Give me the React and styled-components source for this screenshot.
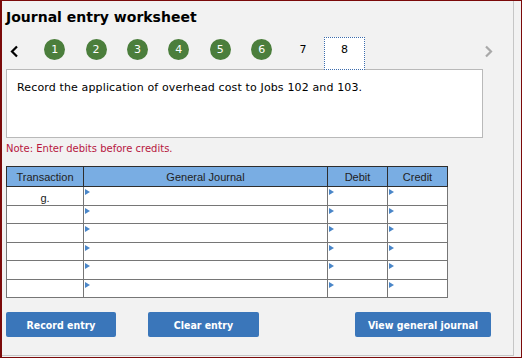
import React from "react";
import styled, { createGlobalStyle } from "styled-components";

const GlobalStyle = createGlobalStyle`
  html, body {
    margin: 0;
    padding: 0;
    background: #f2f2f2;
  }
  * {
    box-sizing: border-box;
  }
`;

const Frame = styled.div`
  width: 522px;
  height: 358px;
  background: #f2f2f2;
  border-style: solid;
  border-color: #7b0a0a;
  border-width: 1px 1px 1px 2px;
  font-family: "DejaVu Sans", Verdana, sans-serif;
`;

const Panel = styled.div`
  width: 512px;
  height: 355px;
  border-right: 1px solid #c6c6c6;
  border-bottom: 1px solid #c6c6c6;
  padding: 0 0 0 4px;
`;

const Title = styled.h1`
  margin: 0;
  padding-top: 8px;
  height: 36px;
  font-size: 14px;
  font-weight: bold;
  color: #000;
`;

const NavRow = styled.div`
  display: flex;
  align-items: flex-start;
  height: 32px;
`;

const Chevron = styled.div`
  width: 28px;
  padding: 6px 0 0 4px;
  color: ${(p) => (p.$muted ? "#a9a9a9" : "#000")};
`;

const Steps = styled.div`
  display: grid;
  grid-template-columns: repeat(8, 41.4px);
  width: 446px;
`;

const Step = styled.div`
  display: flex;
  justify-content: center;
  padding-top: 1.5px;
`;

const Circle = styled.div`
  width: 21px;
  height: 21px;
  border-radius: 50%;
  background: #4b7e3c;
  color: #fff;
  font-size: 11px;
  display: flex;
  align-items: center;
  justify-content: center;
`;

const Plain = styled.div`
  height: 21px;
  line-height: 21px;
  font-size: 11px;
  color: #000;
`;

const Current = styled.div`
  position: relative;
  z-index: 1;
  width: 41px;
  height: 33px;
  margin-top: -1.5px;
  background: #fff;
  border: 1px dotted #3b6cad;
  font-size: 11px;
  text-align: center;
  line-height: 21px;
  padding-top: 1px;
  color: #000;
`;

const Statement = styled.div`
  width: 477px;
  height: 69px;
  background: #fff;
  border: 1px solid #b9b9b9;
  padding: 11px 0 0 10px;
  font-size: 11px;
  letter-spacing: 0.14px;
  line-height: 14px;
  color: #000;
`;

const Note = styled.div`
  height: 28px;
  padding-top: 5px;
  font-size: 10px;
  color: #b7173e;
`;

const Table = styled.table`
  border-collapse: collapse;
  width: 442px;
  table-layout: fixed;
  font-family: "Liberation Sans", Arial, sans-serif;
  font-size: 11px;
  color: #222;
`;

const Th = styled.th`
  height: 20px;
  padding: 0;
  background: #79ade3;
  border: 1px solid #2e2e2e;
  font-weight: normal;
  text-align: center;
  width: ${(p) => p.$w}px;
`;

const Td = styled.td`
  position: relative;
  height: 18.5px;
  padding: 0;
  background: #fff;
  border: 1px solid #767676;
  text-align: center;
  vertical-align: top;
  padding-top: 5px;
`;

const Marker = styled.span`
  position: absolute;
  top: 2px;
  left: 1px;
  width: 0;
  height: 0;
  border-top: 3px solid transparent;
  border-bottom: 3px solid transparent;
  border-left: 5px solid #4a86c8;
`;

const Actions = styled.div`
  display: flex;
  margin-top: 14px;
`;

const Button = styled.button`
  height: 25px;
  width: ${(p) => p.$w}px;
  margin-left: ${(p) => p.$gap || 0}px;
  border: none;
  border-radius: 2px;
  background: #3a76ba;
  color: #fff;
  font-family: "DejaVu Sans Condensed", "DejaVu Sans", Tahoma, sans-serif;
  font-size: 10.5px;
  font-weight: bold;
  padding: 0;
`;

const ChevronIcon = ({ dir }) => (
  <svg width="9" height="13" viewBox="0 0 9 13">
    <path
      d={dir === "left" ? "M7 1.5 L2 6.5 L7 11.5" : "M2 1.5 L7 6.5 L2 11.5"}
      fill="none"
      stroke="currentColor"
      strokeWidth="2.2"
    />
  </svg>
);

const rows = ["g.", "", "", "", "", ""];

export default function App() {
  return (
    <>
      <GlobalStyle />
      <Frame>
        <Panel>
          <Title>Journal entry worksheet</Title>
          <NavRow>
            <Chevron>
              <ChevronIcon dir="left" />
            </Chevron>
            <Steps>
              {[1, 2, 3, 4, 5, 6].map((n) => (
                <Step key={n}>
                  <Circle>{n}</Circle>
                </Step>
              ))}
              <Step>
                <Plain>7</Plain>
              </Step>
              <Step>
                <Current>8</Current>
              </Step>
            </Steps>
            <Chevron $muted>
              <ChevronIcon dir="right" />
            </Chevron>
          </NavRow>
          <Statement>
            Record the application of overhead cost to Jobs 102 and 103.
          </Statement>
          <Note>Note: Enter debits before credits.</Note>
          <Table>
            <thead>
              <tr>
                <Th $w={77}>Transaction</Th>
                <Th $w={244}>General Journal</Th>
                <Th $w={60}>Debit</Th>
                <Th $w={60}>Credit</Th>
              </tr>
            </thead>
            <tbody>
              {rows.map((t, i) => (
                <tr key={i}>
                  <Td>{t}</Td>
                  <Td>
                    <Marker />
                  </Td>
                  <Td>
                    <Marker />
                  </Td>
                  <Td>
                    <Marker />
                  </Td>
                </tr>
              ))}
            </tbody>
          </Table>
          <Actions>
            <Button $w={110}>Record entry</Button>
            <Button $w={111} $gap={32}>
              Clear entry
            </Button>
            <Button $w={136} $gap={96}>
              View general journal
            </Button>
          </Actions>
        </Panel>
      </Frame>
    </>
  );
}
